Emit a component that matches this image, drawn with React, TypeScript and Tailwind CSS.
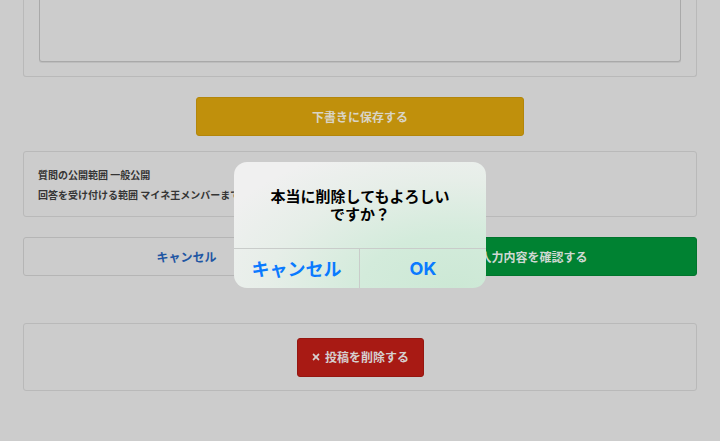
import React from "react";
import { FaTimes } from "react-icons/fa";

const jp = { fontFamily: '"Noto Sans CJK JP", "Noto Sans", sans-serif' };

export default function App() {
  return (
    <div
      className="relative w-[720px] h-[441px] overflow-hidden bg-[#cccccc]"
      style={jp}
    >
      <div className="flex flex-col px-[23px]">
        {/* top card (scrolled) */}
        <div className="h-[77px] border-x border-b border-[#b9b9b9] rounded-b-[3px] px-[15px] pb-[14px]">
          <div className="h-full border-x border-b border-[#a9a9a9] rounded-b-[3px] shadow-[0_1px_0_#bdbdbd]" />
        </div>

        {/* save draft */}
        <div className="flex justify-center mt-[20px]">
          <div className="w-[328px] h-[39px] flex items-center justify-center rounded-[3px] bg-[#c0900c] border border-[#b3860a] text-[12px] font-bold text-[#d9d4c6]">
            下書きに保存する
          </div>
        </div>

        {/* info card */}
        <div className="mt-[15px] h-[66px] border border-[#b9b9b9] rounded-[3px] px-[14px] pt-[13px] text-[10px] leading-[20px] font-bold text-[#353535]">
          <div>質問の公開範囲 一般公開</div>
          <div>回答を受け付ける範囲 マイネ王メンバーまで</div>
        </div>

        {/* cancel / confirm */}
        <div className="mt-[20px] grid grid-cols-2 gap-[20px]">
          <div className="h-[39px] flex items-center justify-center rounded-[3px] border border-[#b5b5b5] text-[12px] font-bold text-[#1f56a3]">
            キャンセル
          </div>
          <div className="h-[39px] flex items-center justify-center rounded-[3px] bg-[#008232] border border-[#00752d] text-[12px] font-bold text-[#cfd8d2]">
            入力内容を確認する
          </div>
        </div>

        {/* delete card */}
        <div className="mt-[47px] h-[68px] border border-[#b9b9b9] rounded-[3px] flex items-center justify-center">
          <div className="w-[127px] h-[39px] flex items-center justify-center gap-[4px] rounded-[3px] bg-[#a81a14] border border-[#951610] text-[12px] font-bold text-[#d6cfcf]">
            <FaTimes className="w-[10px] h-[10px]" />
            <span>投稿を削除する</span>
          </div>
        </div>
      </div>

      {/* alert dialog */}
      <div className="absolute left-[234px] top-[162px] w-[252px] h-[126px] rounded-[13px] overflow-hidden bg-[#efefef] bg-[radial-gradient(ellipse_at_88%_100%,#cce8d5_0%,#d3ebdb_30%,#e6eee8_60%,#f0f0f0_85%)] flex flex-col">
        <div className="h-[86px] flex items-center justify-center text-center text-[15px] leading-[18px] font-semibold text-black">
          <div>
            本当に削除してもよろしい
            <br />
            ですか？
          </div>
        </div>
        <div className="flex-1 grid grid-cols-2 border-t border-[#c9ccca]">
          <div className="flex items-center justify-center border-r border-[#c9ccca] text-[18px] font-bold text-[#0a7aff]">
            キャンセル
          </div>
          <div className="flex items-center justify-center text-[18px] font-bold text-[#0a7aff]" style={{ fontFamily: '"Inter", "Noto Sans", sans-serif' }}>
            OK
          </div>
        </div>
      </div>
    </div>
  );
}
